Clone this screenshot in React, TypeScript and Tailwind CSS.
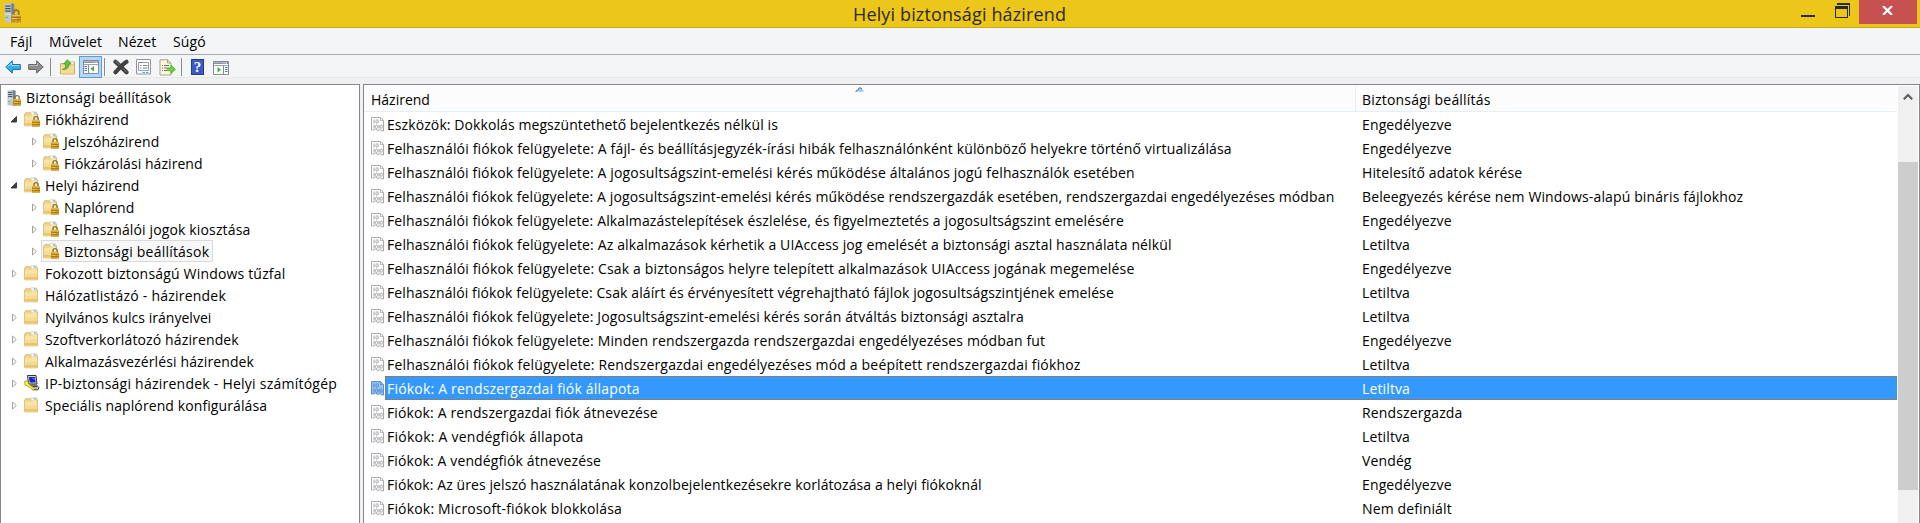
type NodeIcon = 'root' | 'locked' | 'folder' | 'ipsec';
type TreeNode = { label: string; level: 0 | 1 | 2; icon: NodeIcon; arrow?: 'open' | 'closed'; selected?: boolean; tracking: string };

const tree: TreeNode[] = [
  { label: 'Biztonsági beállítások', level: 0, icon: 'root', tracking: 'tracking-[0.22px]' },
  { label: 'Fiókházirend', level: 1, icon: 'locked', arrow: 'open', tracking: 'tracking-normal' },
  { label: 'Jelszóházirend', level: 2, icon: 'locked', arrow: 'closed', tracking: 'tracking-[0.1px]' },
  { label: 'Fiókzárolási házirend', level: 2, icon: 'locked', arrow: 'closed', tracking: 'tracking-[0.06px]' },
  { label: 'Helyi házirend', level: 1, icon: 'locked', arrow: 'open', tracking: 'tracking-[0.1px]' },
  { label: 'Naplórend', level: 2, icon: 'locked', arrow: 'closed', tracking: 'tracking-[0.1px]' },
  { label: 'Felhasználói jogok kiosztása', level: 2, icon: 'locked', arrow: 'closed', tracking: 'tracking-[0.14px]' },
  { label: 'Biztonsági beállítások', level: 2, icon: 'locked', arrow: 'closed', selected: true, tracking: 'tracking-[0.22px]' },
  { label: 'Fokozott biztonságú Windows tűzfal', level: 1, icon: 'folder', arrow: 'closed', tracking: 'tracking-[0.18px]' },
  { label: 'Hálózatlistázó - házirendek', level: 1, icon: 'folder', tracking: 'tracking-[0.22px]' },
  { label: 'Nyilvános kulcs irányelvei', level: 1, icon: 'folder', arrow: 'closed', tracking: 'tracking-[0.03px]' },
  { label: 'Szoftverkorlátozó házirendek', level: 1, icon: 'folder', arrow: 'closed', tracking: 'tracking-[0.13px]' },
  { label: 'Alkalmazásvezérlési házirendek', level: 1, icon: 'folder', arrow: 'closed', tracking: 'tracking-[0.12px]' },
  { label: 'IP-biztonsági házirendek - Helyi számítógép', level: 1, icon: 'ipsec', arrow: 'closed', tracking: 'tracking-[0.24px]' },
  { label: 'Speciális naplórend konfigurálása', level: 1, icon: 'folder', arrow: 'closed', tracking: 'tracking-[0.1px]' },
];

const policies: [string, string, string][] = [
  ['Eszközök: Dokkolás megszüntethető bejelentkezés nélkül is', 'Engedélyezve', 'tracking-[0.086px]'],
  ['Felhasználói fiókok felügyelete: A fájl- és beállításjegyzék-írási hibák felhasználónként különböző helyekre történő virtualizálása', 'Engedélyezve', 'tracking-[0.15px]'],
  ['Felhasználói fiókok felügyelete: A jogosultságszint-emelési kérés működése általános jogú felhasználók esetében', 'Hitelesítő adatok kérése', 'tracking-[0.143px]'],
  ['Felhasználói fiókok felügyelete: A jogosultságszint-emelési kérés működése rendszergazdák esetében, rendszergazdai engedélyezéses módban', 'Beleegyezés kérése nem Windows-alapú bináris fájlokhoz', 'tracking-[0.126px]'],
  ['Felhasználói fiókok felügyelete: Alkalmazástelepítések észlelése, és figyelmeztetés a jogosultságszint emelésére', 'Engedélyezve', 'tracking-[0.13px]'],
  ['Felhasználói fiókok felügyelete: Az alkalmazások kérhetik a UIAccess jog emelését a biztonsági asztal használata nélkül', 'Letiltva', 'tracking-[0.145px]'],
  ['Felhasználói fiókok felügyelete: Csak a biztonságos helyre telepített alkalmazások UIAccess jogának megemelése', 'Engedélyezve', 'tracking-[0.157px]'],
  ['Felhasználói fiókok felügyelete: Csak aláírt és érvényesített végrehajtható fájlok jogosultságszintjének emelése', 'Letiltva', 'tracking-[0.108px]'],
  ['Felhasználói fiókok felügyelete: Jogosultságszint-emelési kérés során átváltás biztonsági asztalra', 'Letiltva', 'tracking-[0.136px]'],
  ['Felhasználói fiókok felügyelete: Minden rendszergazda rendszergazdai engedélyezéses módban fut', 'Engedélyezve', 'tracking-[0.145px]'],
  ['Felhasználói fiókok felügyelete: Rendszergazdai engedélyezéses mód a beépített rendszergazdai fiókhoz', 'Letiltva', 'tracking-[0.171px]'],
  ['Fiókok: A rendszergazdai fiók állapota', 'Letiltva', 'tracking-[0.2px]'],
  ['Fiókok: A rendszergazdai fiók átnevezése', 'Rendszergazda', 'tracking-[0.126px]'],
  ['Fiókok: A vendégfiók állapota', 'Letiltva', 'tracking-[0.24px]'],
  ['Fiókok: A vendégfiók átnevezése', 'Vendég', 'tracking-[0.12px]'],
  ['Fiókok: Az üres jelszó használatának konzolbejelentkezésekre korlátozása a helyi fiókoknál', 'Engedélyezve', 'tracking-[0.083px]'],
  ['Fiókok: Microsoft-fiókok blokkolása', 'Nem definiált', 'tracking-[0.18px]'],
];
const selectedPolicy = 11;

function Padlock() {
  return (
    <g>
      <path d="M10 9.500V7.700a2.100 2.100 0 0 1 4.200 0V9.500" fill="none" stroke="#8b7443" strokeWidth="1.400" />
      <rect x="8" y="9.300" width="8" height="6.500" rx=".4" fill="#d19c22" />
      <path d="M8 11.500h8M8 13.500h8" stroke="#a3741a" strokeWidth=".8" />
      <path d="M8.500 9.900h7M8.500 12.500h4" stroke="#edc75c" strokeWidth=".8" />
    </g>
  );
}

function FolderShape() {
  return (
    <g>
      <path d="M.7 3.300 1.700 1.800h4.500l1 1H13.500v12H.7z" fill="#f3d88c" stroke="#cda85c" strokeWidth=".8" />
      <rect x="7" y=".9" width="5.500" height="3" fill="#fff" stroke="#d2b87c" strokeWidth=".6" />
      <path d="M9.800 2h2.200" stroke="#3f9be0" strokeWidth="1" />
      <path d="M1 5.300h5.500l1.500-1.200h5.200v10.400H1z" fill="#f9e4a6" />
      <path d="M1.100 8.500h12v3.500h-12z" fill="#f5da92" />
      <path d="M1.100 12h12v2.400h-12z" fill="#eac570" />
    </g>
  );
}

function ServerIcon({ className }: { className: string }) {
  return (
    <svg className={`shrink-0 ${className}`} viewBox="0 0 14 16" preserveAspectRatio="none">
      <path d="M.5.500 6 0l2.500.8v14.400L6 16 .5 15z" fill="#bcc6cd" />
      <path d="M6 0l2.500.8v14.400L6 16z" fill="#75838e" />
      <path d="M1 2.500h4.500M1 4.500h4.500M1 6.500h4.500" stroke="#46525d" strokeWidth=".9" />
      <path d="M.5 9H6" stroke="#dfe5e9" strokeWidth=".8" />
      <path d="M1.500 11.500h1.500" stroke="#44c34e" strokeWidth="1" />
      <g transform="translate(-2 0)"><Padlock /></g>
    </svg>
  );
}

function TreeIcon({ kind }: { kind: NodeIcon }) {
  if (kind === 'root') return <ServerIcon className="h-4 w-[14px]" />;
  if (kind === 'ipsec')
    return (
      <svg className="size-4 shrink-0" viewBox="0 0 16 16">
        <path d="M3.500.5h8.500l1 8.500H4.500z" fill="#d5d5d5" stroke="#222" strokeWidth=".9" />
        <path d="M5 2h6l.6 5.500H5.700z" fill="#1426c9" />
        <path d="M7.500 3h3v2z" fill="#5d82f2" />
        <path d="M6.500 10h6l2.500 2.500-1 2.300H9z" fill="#b9b9b9" stroke="#333" strokeWidth=".9" />
        <path d="M8.500 11.500h4.500" stroke="#222" strokeWidth=".8" />
        <path d="M.5 6.500 3 5.700 4.500 7.500 4.700 9l6 4.500-1.200 1.800L3.100 10.700 1 10z" fill="#fff022" stroke="#6d6500" strokeWidth=".5" />
      </svg>
    );
  return (
    <svg className="size-4 shrink-0" viewBox="0 0 16 16">
      <FolderShape />
      {kind === 'locked' && <Padlock />}
    </svg>
  );
}

function PolicyIcon({ selected }: { selected: boolean }) {
  const ink = selected ? '#5c8fce' : '#a9a9af';
  return (
    <svg className="mt-px h-[15px] w-[14px] shrink-0" viewBox="0 0 14 15">
      <path d="M.5.500h9l3 3v10.500H11l-2-1.500-2 1-2.500-1.500-2 1H.5z" fill={selected ? '#8fc0f5' : '#fff'} stroke={ink} />
      <path d="M9.500.5v3h3" fill="none" stroke={ink} strokeWidth=".8" />
      <path d="M3 2.500v4M3 11.500V8M8 8v3.500" stroke={ink} strokeWidth="1.100" />
      <rect x="5" y="2.800" width="2.300" height="3.400" rx="1" fill="none" stroke={ink} />
      <rect x="4.500" y="8.200" width="2" height="3.200" rx="1" fill="none" stroke={ink} />
      <rect x="9.300" y="8.200" width="1.900" height="3.200" rx="1" fill="none" stroke={ink} />
    </svg>
  );
}

function Expander({ state }: { state?: 'open' | 'closed' }) {
  return (
    <svg className="h-[9px] w-2 shrink-0" viewBox="0 0 8 9">
      {state === 'open' && <path d="M6.500 1.500v5.500h-5.500z" fill="#404040" stroke="#262626" strokeWidth=".8" />}
      {state === 'closed' && <path d="M2.500 1v7l3.800-3.500z" fill="#fff" stroke="#a2a2a2" />}
    </svg>
  );
}

function WindowGlyph({ flip }: { flip?: boolean }) {
  return (
    <svg className="h-[14px] w-4" viewBox="0 0 16 14">
      <path d="M.5.500h15v13H.5z" fill="#fff" stroke="#868d96" />
      <path d="M1 1h14v2H1z" fill="#8a939e" />
      <path d="M1 1.500h9" stroke="#a9b1ba" />
      <path d="M10.500 2h1M12.500 2h1.500" stroke="#fff" />
      <path d="M1 4.500h14" stroke="#9aa1aa" />
      {flip ? (
        <g>
          <path d="M10.500 5v8.500" stroke="#868d96" />
          <path d="M12 6.500h2.500M12 8.500h2.500M12 10.500h2.500" stroke="#3c7ac0" />
          <path d="M4.500 6v5.500L8 8.800z" fill="#3fae35" />
        </g>
      ) : (
        <g>
          <path d="M5.500 5v8.500" stroke="#868d96" />
          <path d="M1.500 6.500H4M1.500 8.500H4M1.500 10.500H4" stroke="#3c7ac0" />
          <path d="M11 6v5.500L7.500 8.800z" fill="#3fae35" />
        </g>
      )}
    </svg>
  );
}

function Separator() {
  return <div className="h-[18px] w-px bg-[#8c8c8c]" />;
}

function Toolbar() {
  return (
    <div className="flex h-[23px] shrink-0 items-center border-b border-[#e6e7e9] bg-[#f4f5f7] pt-[2px] pl-[5px]">
      <svg className="h-[14px] w-4" viewBox="0 0 16 14">
        <path d="M.8 7 7.300.8v3.700h8v5h-8v3.700z" fill="#35b0ee" stroke="#1a70b4" />
        <path d="M2.500 6.700 6.500 3v2.500h8" fill="none" stroke="#9adcf9" />
      </svg>
      <svg className="ml-[7px] h-[14px] w-4" viewBox="0 0 16 14">
        <path d="M15.200 7 8.700.8v3.700h-8v5h8v3.700z" fill="#8d8d8d" stroke="#666" />
        <path d="M1.500 5.500h8V3" fill="none" stroke="#bcbcbc" />
      </svg>
      <div className="ml-[6px]"><Separator /></div>
      <svg className="ml-[9px] size-4" viewBox="0 0 16 16">
        <path d="M.5 4.500h5l1-1.500h8v12H.5z" fill="#f3d384" stroke="#c79f4c" strokeWidth=".8" />
        <path d="M10.500 3h3.500v2h-3.500z" fill="#fff" stroke="#d2b87c" strokeWidth=".5" />
        <path d="M1 7h13v7.500H1z" fill="#f6dc98" />
        <path d="M2.500 10.500C5 9.500 6 8 5.800 5H3.500L7.500.7 11 5H9c0 3.500-2 5.800-6.500 5.500z" fill="#5cc63a" stroke="#2f9420" strokeWidth=".7" />
      </svg>
      <div className="ml-[3px] flex h-[22px] w-[23px] shrink-0 items-center justify-center border border-[#569de5] bg-[#b5d7f6]">
        <WindowGlyph />
      </div>
      <div className="ml-[2px]"><Separator /></div>
      <svg className="ml-[8px] size-4" viewBox="0 0 16 16">
        <path d="M2.500 2.800c3.500 2.700 7 6.700 11 10.400M13.500 2.800c-4 2.700-7.500 6.700-11 10.400" stroke="#424242" strokeWidth="4.200" strokeLinecap="round" />
        <path d="M2.500 2l4 4M10 9.500l3.500 3.500" stroke="#7d7d7d" strokeWidth="1" />
      </svg>
      <svg className="ml-[7px] size-4" viewBox="0 0 16 16">
        <path d="M.5.500h14v14.500H.5z" fill="#fafafa" stroke="#92979e" />
        <path d="M2.500 3.500h10v8h-10z" fill="#fff" stroke="#9ba1a8" />
        <path d="M3 3.500h4M4 6.500h1.500M7 6.500h4.500M4 9h1.500M7 9h4.500" stroke="#6d87a2" />
        <path d="M6.500 13.500h2.500M10 13.500h2.500" stroke="#39b5dd" />
      </svg>
      <svg className="ml-[7px] size-[17px]" viewBox="0 0 17 17">
        <path d="M1 .8h7.500L12 4v12H1z" fill="#fdf6d8" stroke="#a8a390" />
        <path d="M8.500.8V4H12" fill="none" stroke="#a8a390" />
        <path d="M3 6.500h1M5 6.500h5M3 9h1M5 9h3M3 11.500h1M5 11.500h3" stroke="#6a6a78" />
        <path d="M8.500 8.800h3.500V6l4.500 4.300-4.500 4.400v-2.900H8.500z" fill="#6cd03c" stroke="#3ba528" strokeWidth=".6" />
      </svg>
      <div className="ml-[5px]"><Separator /></div>
      <div className="ml-[9px] flex h-4 w-[13px] items-center justify-center border border-[#233c8c] bg-[#3a5bc4] font-['Liberation_Serif',serif] text-[15px] leading-4 font-bold text-white">?</div>
      <div className="mt-[2px] ml-[9px] flex"><WindowGlyph flip /></div>
    </div>
  );
}

function TitleBar() {
  return (
    <header className="flex h-7 shrink-0 items-start border-b border-[#cba91a] bg-[#edc61a] text-[#2b2a1e]">
      <div className="flex w-[853px] pt-[3px] pl-1"><ServerIcon className="h-5 w-[17px]" /></div>
      <h1 className="flex-1 text-[18px] leading-[28px] tracking-[0.14px] whitespace-pre">Helyi biztonsági házirend</h1>
      <svg className="mr-[9px] h-5 w-[49px]" viewBox="0 0 49 20">
        <path d="M0 15h14v2H0z" fill="#262b26" />
        <path d="M36 3h13v13h-1V5H36z" fill="#262b26" />
        <path d="M34 6h13v12H34zm1 3v8h11V9z" fill="#262b26" fillRule="evenodd" />
      </svg>
      <div className="mr-[3px] flex h-6 w-[58px] justify-center bg-[#c75050] pt-[6px]">
        <svg className="mr-[1px] h-[9px] w-[11px]" viewBox="0 0 11 9">
          <path d="M1 0 10 9M10 0 1 9" stroke="#fff" strokeWidth="2.200" />
        </svg>
      </div>
    </header>
  );
}

function TreePane() {
  const indent = { 0: 'pl-[5px]', 1: 'pl-[9px]', 2: 'pl-[29px]' };
  return (
    <nav className="flex w-[360px] flex-col border border-b-0 border-[#828790] bg-white pt-px">
      {tree.map((node, i) => (
        <div key={i} className={`flex h-[22px] items-center ${indent[node.level]}`}>
          {node.level > 0 && <Expander state={node.arrow} />}
          <div
            className={`flex h-[22px] items-center border whitespace-pre ${node.level === 2 ? 'ml-[3px]' : node.level === 1 ? 'ml-1' : ''} ${
              node.selected ? 'border-[#dadada] bg-[#f7f7f7]' : 'border-transparent'
            }`}
          >
            <div className={node.level === 0 ? 'pt-px' : 'pl-px'}><TreeIcon kind={node.icon} /></div>
            <span className={`pt-[2px] pr-[3px] pl-[5px] ${node.tracking}`}>{node.label}</span>
          </div>
        </div>
      ))}
    </nav>
  );
}

function ListPane() {
  return (
    <main className="flex w-[1557px] border border-b-0 border-[#828790] bg-white">
      <div className="w-[1533px]">
        <div className="relative flex h-[27px] items-center border-b border-[#e5eff8] bg-[#fcfcfc] pl-[7px]">
          <div className="w-[984px] pt-[4px]">Házirend</div>
          <div className="flex h-full items-center border-l border-[#e5eff8] pt-[4px] pl-[6px] tracking-[0.2px]">Biztonsági beállítás</div>
          <svg className="absolute top-[2px] left-[491px] h-[5px] w-[10px]" viewBox="0 0 10 5">
            <path d="M5 .3.500 4.700h9z" fill="#9fcbe4" />
            <path d="M.3 5 5 .5l2 1.700" fill="none" stroke="#3c6f91" />
          </svg>
        </div>
        {policies.map(([name, value, tracking], i) => {
          const selected = i === selectedPolicy;
          return (
            <div key={name} className="flex h-6 items-center pl-[7px]">
              <PolicyIcon selected={selected} />
              <div
                className={`flex h-6 w-[1512px] items-center border-y border-l pt-[2px] pl-px whitespace-pre ${
                  selected ? 'border-dotted border-[#cc6600] bg-[#3399ff] text-white' : 'border-transparent'
                }`}
              >
                <div className={`w-[975px] ${tracking}`}>{name}</div>
                <span className="tracking-[0.13px]">{value}</span>
              </div>
            </div>
          );
        })}
      </div>
      <div className="mt-px ml-px flex w-5 flex-col bg-[#f0f0f0]">
        <div className="flex h-[76px] justify-center pt-[7px]">
          <svg className="h-[7px] w-[10px]" viewBox="0 0 10 7">
            <path d="M.7 6.300 5 2l4.300 4.300" fill="none" stroke="#606060" strokeWidth="2.200" />
          </svg>
        </div>
        <div className="h-[328px] bg-[#cdcdcd]" />
      </div>
    </main>
  );
}

export default function App() {
  return (
    <div className="flex h-[523px] w-[1920px] flex-col overflow-hidden bg-[#f0f0f0] font-['Open_Sans','Noto_Sans',sans-serif] text-[14px] leading-[20px] text-black">
      <TitleBar />
      <div className="flex h-[27px] shrink-0 items-center border-b border-[#a9abb0] bg-[#f4f5f7] pt-[2px] tracking-[0.1px] whitespace-pre">
        <span className="w-[39px] pl-[10px]">Fájl</span>
        <span className="w-[69px] pl-[10px]">Művelet</span>
        <span className="w-[55px] pl-[10px]">Nézet</span>
        <span className="pl-[10px]">Súgó</span>
      </div>
      <Toolbar />
      <div className="mt-[6px] flex min-h-0 flex-1 gap-[3px]">
        <TreePane />
        <ListPane />
      </div>
    </div>
  );
}
